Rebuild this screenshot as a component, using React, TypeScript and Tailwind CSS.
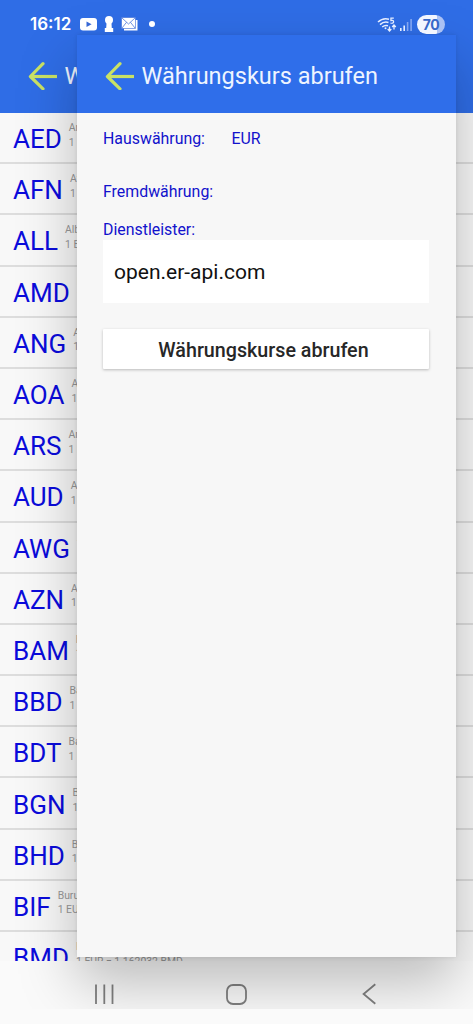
import React from 'react';

type Rate = { code: string; name: string; rate: string };

const rates: Rate[] = [
  { code: 'AED', name: 'Arabische Dirham', rate: '1 EUR = 4.267564 AED' },
  { code: 'AFN', name: 'Afghani', rate: '1 EUR = 77.12 AFN' },
  { code: 'ALL', name: 'Albanischer Lek', rate: '1 EUR = 96.61 ALL' },
  { code: 'AMD', name: 'Dram', rate: '1 EUR = 443.2 AMD' },
  { code: 'ANG', name: 'Antillen-Gulden', rate: '1 EUR = 2.08 ANG' },
  { code: 'AOA', name: 'Angola Kwanza', rate: '1 EUR = 1071 AOA' },
  { code: 'ARS', name: 'Argentinischer Peso', rate: '1 EUR = 1650 ARS' },
  { code: 'AUD', name: 'Australischer Dollar', rate: '1 EUR = 1.77 AUD' },
  { code: 'AWG', name: 'Aruba-Florin', rate: '1 EUR = 2.08 AWG' },
  { code: 'AZN', name: 'Aserbaidschan-Manat', rate: '1 EUR = 1.97 AZN' },
  { code: 'BAM', name: 'Bosnische Mark', rate: '1 EUR = 1.95 BAM' },
  { code: 'BBD', name: 'Barbados-Dollar', rate: '1 EUR = 2.32 BBD' },
  { code: 'BDT', name: 'Bangladesch Taka', rate: '1 EUR = 141.7 BDT' },
  { code: 'BGN', name: 'Bulgarischer Lew', rate: '1 EUR = 1.95 BGN' },
  { code: 'BHD', name: 'Bahrain-Dinar', rate: '1 EUR = 0.43 BHD' },
  { code: 'BIF', name: 'Burundi-Franc', rate: '1 EUR = 3445 BIF' },
  { code: 'BMD', name: 'Bermuda-Dollar', rate: '1 EUR = 1.162032 BMD' },
];

function BackArrow() {
  return (
    <svg className="h-[28px] w-[29px] shrink-0" viewBox="0 0 29 28" fill="none" stroke="#c9e265" strokeWidth="3.2" strokeLinecap="round" strokeLinejoin="round">
      <path d="M15 1.7L2.4 14.5L15 26.8" />
      <path d="M2.5 14.5H29" strokeLinecap="butt" />
    </svg>
  );
}

function StatusBar() {
  return (
    <div className="absolute top-0 left-0 flex h-[48px] w-full items-center text-white">
      <span className="ml-[30px] w-[50px] font-['Inter'] text-[17px] leading-none font-semibold">16:12</span>
      <svg className="h-[13px] w-[17px]" viewBox="0 0 17 13">
        <rect width="17" height="12.6" rx="3" fill="white" />
        <path d="M6.5 3.6L11.6 6.3L6.5 9Z" fill="#3768d5" />
      </svg>
      <svg className="ml-[7px] h-[16px] w-[10px]" viewBox="0 0 10 16" fill="white">
        <circle cx="5" cy="4" r="4" />
        <path d="M2.6 6H7.4L7.8 12H9.2V16H.8V12H2.2Z" />
      </svg>
      <svg className="ml-[7px] h-[14px] w-[17px]" viewBox="0 0 17 14" fill="none">
        <path d="M3 3H16.5V13.5H3Z" fill="white" />
        <path d="M.5 .5H14.5V11.5H.5Z" fill="white" stroke="#3768d5" strokeWidth=".6" />
        <path d="M1 1L7.5 7L14 1M1 11L5.5 5.3M14 11L9.5 5.3" stroke="#3768d5" strokeWidth=".7" />
      </svg>
      <span className="ml-[11px] size-[6px] rounded-full bg-white" />
      <svg className="ml-[222px] h-[15px] w-[20px]" viewBox="0 0 20 15" fill="none" stroke="#e6eeff" strokeWidth="1.5">
        <path d="M1 5Q6 .3 12 2.2M3 7.6Q7 4 11.5 5.5M5.2 10Q8 7.6 11 8.8" />
        <circle cx="8.5" cy="11.3" r="1" fill="#e6eeff" stroke="none" />
        <path d="M12.5 9.5V14M10.7 12L12.5 14L14.3 12M17 12.5V8M15.2 10L17 8L18.8 10" strokeWidth="1.3" />
        <path d="M16.8 1.2H13.9V3.6Q16.8 3 16.6 5Q16.2 6.8 13.4 6" strokeWidth="1.2" />
      </svg>
      <svg className="ml-[3px] h-[13px] w-[12px]" viewBox="0 0 12 13">
        <path d="M0 10H1.6V13H0ZM3.4 7.5H5V13H3.4Z" fill="#e6eeff" />
        <path d="M6.8 4H8.4V13H6.8ZM10.3 1H11.9V13H10.3Z" fill="#83a6f1" />
      </svg>
      <span className="ml-[5px] flex h-[19px] w-[28px] items-center justify-center rounded-full bg-[linear-gradient(90deg,#f2f6ff_70%,#abc1f4_70%)] font-['Inter'] text-[14px] font-bold tracking-[-0.5px] text-[#3768c8]">
        70
      </span>
    </div>
  );
}

function NavBar() {
  return (
    <div className="flex h-[63px] w-full bg-[#fafafa]">
      <svg className="h-full w-full" viewBox="0 0 473 63" fill="none" stroke="#808080" strokeWidth="1.8">
        <path d="M96 23.5V43M104.3 23.5V43M112.5 23.5V43" />
        <rect x="227" y="24" width="19" height="19" rx="6" />
        <path d="M375.3 23.3L363.6 33L375.3 42.7" />
      </svg>
    </div>
  );
}

export default function App() {
  return (
    <div className="relative flex h-[1024px] w-[473px] flex-col overflow-hidden bg-[#f9f9f9] font-['Roboto','Liberation_Sans',sans-serif]">
      <header className="flex h-[113px] shrink-0 items-start bg-[#2f6de6] pt-[62px] pl-[28px]">
        <BackArrow />
        <h2 className="ml-[7.5px] text-[23.5px] leading-[28px] text-[#eef4ff]">W</h2>
      </header>
      <main className="flex h-[848px] shrink-0 flex-col overflow-hidden bg-[#f8f8f8]">
        {rates.map((item) => (
          <div key={item.code} className="flex h-[51.2px] shrink-0 items-center border-b-2 border-[#dddddd] pt-[3px] pl-[13px] whitespace-nowrap">
            <span className="text-[26px] leading-none text-[#0b0bdc]">{item.code}</span>
            <span className="-mt-[7px] ml-[7px] flex flex-col text-[10.4px] leading-[14.6px] text-[#999999]">
              <span>{item.name}</span>
              <span>{item.rate}</span>
            </span>
          </div>
        ))}
      </main>
      <NavBar />

      <div className="pointer-events-none absolute inset-x-0 top-0 h-[1009px] overflow-hidden">
        <section className="absolute top-[35px] left-[77px] flex h-[921.5px] w-[378.5px] flex-col bg-[#f7f7f7] shadow-[0_26px_54px_rgba(0,0,0,0.25),0_0_4px_rgba(0,0,0,0.1)]">
          <header className="flex h-[78px] shrink-0 items-start bg-[#2f6eea] pt-[27px] pl-[28px]">
            <BackArrow />
            <h1 className="ml-[7.5px] text-[23.5px] leading-[28px] text-[#eef4ff]">Währungskurs abrufen</h1>
          </header>
          <div className="flex flex-col pt-[16px] pr-[26.5px] pl-[26px] text-[15.9px] leading-[20px] text-[#1212cc]">
            <div className="flex">
              <span className="w-[128.5px]">Hauswährung:</span>
              <span>EUR</span>
            </div>
            <div className="mt-[33px]">Fremdwährung:</div>
            <div className="mt-[18px]">Dienstleister:</div>
            <div className="flex h-[63px] items-center bg-white pl-[11px] text-[21px] text-[#111111]">open.er-api.com</div>
            <button className="mt-[26px] h-[40px] rounded-[1px] bg-white pt-[3px] pr-[5px] text-[19.7px] font-medium text-[#272727] shadow-[0_1px_3px_rgba(0,0,0,0.25)]">
              Währungskurse abrufen
            </button>
          </div>
        </section>
      </div>
      <StatusBar />
    </div>
  );
}
